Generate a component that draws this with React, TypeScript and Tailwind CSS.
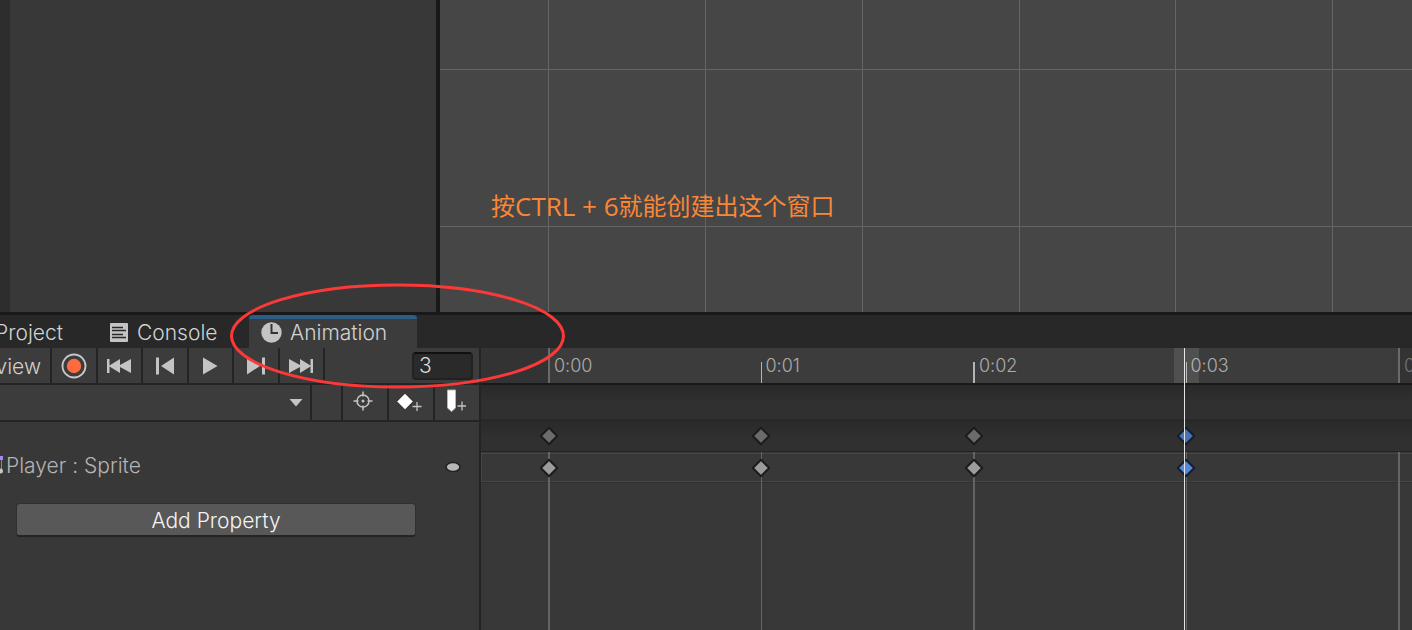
import type { ReactNode } from "react";

const GRID_X = [108.5, 265.5, 422.5, 579.5, 735.5, 892.5, 1049.5, 1206.5];
const GRID_Y = [69.5, 226.5];
const FRAMES = ["0:00", "0:01", "0:02", "0:03"];

function ToolButton({ label, children }: { label: string; children: ReactNode }) {
  return (
    <button
      type="button"
      aria-label={label}
      className="flex h-full min-w-0 flex-1 items-center justify-center border-r-2 border-[#242424] text-[#c4c4c4]"
    >
      {children}
    </button>
  );
}

function Keyframe({ summary, selected }: { summary?: boolean; selected?: boolean }) {
  const fill = selected ? (summary ? "#4772b8" : "#5588dd") : summary ? "#6b6b6b" : "#9c9c9c";
  return (
    <svg width="20" height="20" viewBox="0 0 20 20" className="relative -ml-[9px] block">
      <path
        d="M10 1.8 18.2 10 10 18.2 1.8 10Z"
        fill={fill}
        stroke={selected ? "#161e2c" : "#1c1c1c"}
        strokeWidth="2"
        strokeLinejoin="round"
      />
    </svg>
  );
}

function KeyRow({ summary }: { summary?: boolean }) {
  return (
    <div className="grid h-full w-[849px] shrink-0 grid-cols-4 items-center">
      {FRAMES.map((frame, i) => (
        <Keyframe key={frame} summary={summary} selected={i === 3} />
      ))}
    </div>
  );
}

function Hierarchy() {
  return (
    <aside className="flex w-[440px] shrink-0 border-r-4 border-[#191919] bg-[#383838]">
      <div className="w-[10px] bg-[#2d2d2d]" />
    </aside>
  );
}

function SceneView() {
  return (
    <main className="relative min-w-0 flex-1 overflow-hidden bg-[#464646]">
      <svg className="absolute inset-0 h-full w-full" stroke="#656565" strokeWidth="1">
        {GRID_X.map((x) => (
          <line key={x} x1={x} x2={x} y1="0" y2="100%" />
        ))}
        {GRID_Y.map((y) => (
          <line key={y} x1="0" x2="100%" y1={y} y2={y} />
        ))}
      </svg>
      <p className="relative mt-[188px] ml-[51px] flex items-center font-['Open_Sans','Noto_Sans_CJK_SC',sans-serif] text-[24px] leading-9 whitespace-nowrap text-[#fa8737]">
        按<span className="text-[26px]">CTRL + 6</span>就能创建出这个窗口
      </p>
    </main>
  );
}

function TabBar() {
  return (
    <nav className="flex h-[33px] items-stretch bg-[#282828] text-[21px] font-light text-[#d2d2d2]">
      <button type="button" className="flex w-[87px] items-center justify-end overflow-hidden pt-0.5 pr-6">
        <span className="shrink-0">Project</span>
      </button>
      <button type="button" className="flex w-[162px] items-center gap-[9px] pt-0.5 pl-[23px]">
        <svg width="18" height="20" viewBox="0 0 18 20" className="shrink-0">
          <rect width="18" height="19" rx="1" fill="#c4c4c4" />
          <path d="M2 4.500h11M2 7.500h14M2 11.500h11M2 14.500h14" stroke="#282828" strokeWidth="1.400" />
        </svg>
        Console
      </button>
      <button
        type="button"
        className="flex w-[168px] items-center gap-2 rounded-t-sm border-t-4 border-[#2c5d87] bg-[#3c3c3c] pb-0.5 pl-3"
      >
        <svg width="21" height="21" viewBox="0 0 21 21" className="shrink-0">
          <circle cx="10.5" cy="10.5" r="10.2" fill="#c4c4c4" />
          <path d="M10.5 2v9H17" fill="none" stroke="#333" strokeWidth="2" />
        </svg>
        Animation
      </button>
    </nav>
  );
}

function PlaybackBar() {
  return (
    <div className="flex h-[37px] items-stretch border-b-2 border-[#242424] bg-[#3c3c3c]">
      <button
        type="button"
        className="flex w-[52px] items-center justify-end overflow-hidden border-r-2 border-[#242424] pt-0.5 pr-[9px] text-[21px] font-light text-[#d0d0d0]"
      >
        <span className="shrink-0">Preview</span>
      </button>
      <div className="flex w-[273px]">
        <ToolButton label="Record">
          <svg width="26" height="26" viewBox="0 0 26 26">
            <circle cx="13" cy="13" r="11.5" fill="none" stroke="#c8c8c8" strokeWidth="1.8" />
            <circle cx="13" cy="13" r="7.2" fill="#ff6b40" />
          </svg>
        </ToolButton>
        <ToolButton label="First frame">
          <svg width="24" height="16" viewBox="0 0 24 16" fill="currentColor">
            <path d="M0 1h2.5v6.5L13 1v6L24 1v14L13 9v6L2.500 8.500V15H0Z" />
          </svg>
        </ToolButton>
        <ToolButton label="Previous keyframe">
          <svg width="18" height="18" viewBox="0 0 18 18" fill="currentColor">
            <path d="M0 .5h3v17H0ZM18 .5v17L5 9Z" />
          </svg>
        </ToolButton>
        <ToolButton label="Play">
          <svg width="16" height="18" viewBox="0 0 16 18" fill="currentColor">
            <path d="M1 .5v17L15.500 9Z" />
          </svg>
        </ToolButton>
        <ToolButton label="Next keyframe">
          <svg width="18" height="18" viewBox="0 0 18 18" fill="currentColor">
            <path d="M15 .5h3v17h-3ZM0 .5v17L13 9Z" />
          </svg>
        </ToolButton>
        <ToolButton label="Last frame">
          <svg width="24" height="16" viewBox="0 0 24 16" fill="currentColor">
            <path d="M24 1h-2.500v6.500L11 1v6L0 1v14L11 9v6L21.500 8.500V15H24Z" />
          </svg>
        </ToolButton>
      </div>
      <input
        type="text"
        aria-label="Current frame"
        defaultValue="3"
        className="mt-1 mr-1.5 ml-auto h-7 w-[61px] rounded border-2 border-[#212121] border-t-[#101010] bg-[#2a2a2a] pb-0.5 pl-[5px] text-[21px] leading-6 font-light text-[#dcdcdc] outline-none"
      />
    </div>
  );
}

function ClipBar() {
  return (
    <div className="flex h-[37px] items-stretch border-b-2 border-[#242424] bg-[#3c3c3c]">
      <div className="relative w-[312px] border-r-2 border-[#242424]">
        <select aria-label="Animation clip" className="h-full w-full appearance-none bg-transparent outline-none">
          <option value=""></option>
        </select>
        <svg
          width="14"
          height="8"
          viewBox="0 0 14 8"
          className="pointer-events-none absolute top-[14px] right-[7px]"
        >
          <path d="M.5 0h13L7 7.500Z" fill="#c4c4c4" />
        </svg>
      </div>
      <div className="w-[31px] border-r-2 border-[#242424]" />
      <div className="flex flex-1">
        <ToolButton label="Filter by selection">
          <svg width="20" height="20" viewBox="0 0 20 20" fill="none" stroke="currentColor" strokeWidth="1.5" className="-mt-1 -ml-1">
            <circle cx="10" cy="10" r="6" />
            <path d="M10 .5v5M10 14.500v5M.5 10h5M14.500 10h5" />
            <circle cx="10" cy="10" r="1.500" fill="currentColor" stroke="none" />
          </svg>
        </ToolButton>
        <ToolButton label="Add keyframe">
          <svg width="26" height="22" viewBox="0 0 26 22" className="-ml-1">
            <path d="m9 2 7.500 7.500L9 17 1.500 9.500Z" fill="#fff" stroke="#cfcfcf" />
            <path d="M21 10v9M16.500 14.500h9" stroke="#c4c4c4" strokeWidth="1.300" />
          </svg>
        </ToolButton>
        <button type="button" aria-label="Add event" className="flex flex-1 items-center justify-center">
          <svg width="22" height="24" viewBox="0 0 22 24" className="-mt-1 -ml-1">
            <path d="M3.500 1h8v18l-4 3.500-4-3.500Z" fill="#fff" stroke="#b5b5b5" />
            <path d="M18 12.500v9M13.500 17h9" stroke="#c4c4c4" strokeWidth="1.300" />
          </svg>
        </button>
      </div>
    </div>
  );
}

function PropertyList() {
  return (
    <section className="flex-1 pt-7">
      <div className="flex h-8 items-center">
        <svg width="4" height="20" viewBox="0 0 4 20" className="shrink-0">
          <path d="M1.500 3v13" stroke="#8d77cf" strokeWidth="1" />
          <rect width="3" height="4" fill="#a487f5" />
          <circle cx="0.5" cy="15" r="2.500" fill="#c4c4c4" />
        </svg>
        <span className="ml-0.5 text-[21px] font-light text-[#b4b4b4]">Player : Sprite</span>
        <button type="button" aria-label="Property options" className="mr-[18px] ml-auto">
          <svg width="16" height="12" viewBox="0 0 16 12" className="block">
            <ellipse cx="8" cy="7" rx="7" ry="4.500" fill="#b8b8b8" stroke="#222" strokeWidth="1.600" />
          </svg>
        </button>
      </div>
      <button
        type="button"
        className="mt-[21px] ml-4 h-[34px] w-[400px] rounded border border-b-2 border-[#303030] border-b-[#242424] bg-[#585858] pt-0.5 text-[21px] leading-7 font-light text-[#f4f4f4]"
      >
        Add Property
      </button>
    </section>
  );
}

function Timeline() {
  return (
    <section className="relative flex min-w-0 flex-1 flex-col overflow-hidden bg-[#383838]">
      <div className="relative flex h-[37px] border-b-2 border-[#191919] bg-[#333333]">
        <div className="absolute top-0 left-[693px] z-10 h-[35px] w-[25px] bg-white/10" />
        <div className="w-[67px] shrink-0" />
        <div className="grid w-[850px] shrink-0 grid-cols-4 bg-[#3c3c3c] text-[18px] font-light text-[#acacac]">
          {FRAMES.map((frame, i) => (
            <div key={frame} className="flex items-end">
              <span
                className={
                  i === 0
                    ? "h-full w-0.5 bg-[#6a6a6a]"
                    : i === 2
                      ? "h-[21px] w-0.5 bg-[#b4b4b4]"
                      : "h-[21px] w-px bg-[#b4b4b4]"
                }
              />
              <span className="ml-1 leading-[35px]">{frame}</span>
            </div>
          ))}
        </div>
        <div className="flex border-l-2 border-[#6a6a6a] pl-1 text-[18px] leading-[35px] font-light text-[#737373]">
          0:04
        </div>
      </div>
      <div className="h-9 border-b-2 border-[#292929] bg-linear-to-b from-[#292929] to-[#303030] to-50%" />
      <div className="flex h-[31px] border-b border-[#242424] bg-linear-to-b from-[#2a2a2a] to-[#303030] to-60% pl-[67px]">
        <KeyRow summary />
      </div>
      <div className="relative flex flex-1 flex-col">
        <div className="absolute inset-y-0 left-[67px] grid w-[1063px] grid-cols-5">
          <span className="w-0.5 bg-[#646464]" />
          <span className="w-px bg-[#646464]" />
          <span className="w-0.5 bg-[#646464]" />
          <span className="w-px bg-[#646464]" />
          <span className="w-0.5 bg-[#646464]" />
        </div>
        <div className="mt-px flex h-[29px] border-y border-l border-[#464646] pl-[66px]">
          <KeyRow />
        </div>
        <div className="h-px bg-[#2f2f2f]" />
      </div>
      <div className="absolute inset-y-0 left-[703px] w-px bg-[#e4e4e4]" />
    </section>
  );
}

export default function App() {
  return (
    <div className="relative flex min-h-screen flex-col overflow-hidden bg-[#383838] font-[Inter,sans-serif] [font-feature-settings:'calt'_0]">
      <div className="flex h-[315px] border-b-[3px] border-[#191919]">
        <Hierarchy />
        <SceneView />
      </div>
      <TabBar />
      <div className="flex flex-1">
        <div className="flex w-[481px] shrink-0 flex-col border-r-2 border-[#242424]">
          <PlaybackBar />
          <ClipBar />
          <PropertyList />
        </div>
        <Timeline />
      </div>
      <svg
        width="340"
        height="108"
        viewBox="0 0 340 108"
        className="pointer-events-none absolute top-[282px] left-[228px] z-20"
      >
        <ellipse cx="169.500" cy="54" rx="166" ry="51" fill="none" stroke="#fd3838" strokeWidth="3" />
      </svg>
    </div>
  );
}
